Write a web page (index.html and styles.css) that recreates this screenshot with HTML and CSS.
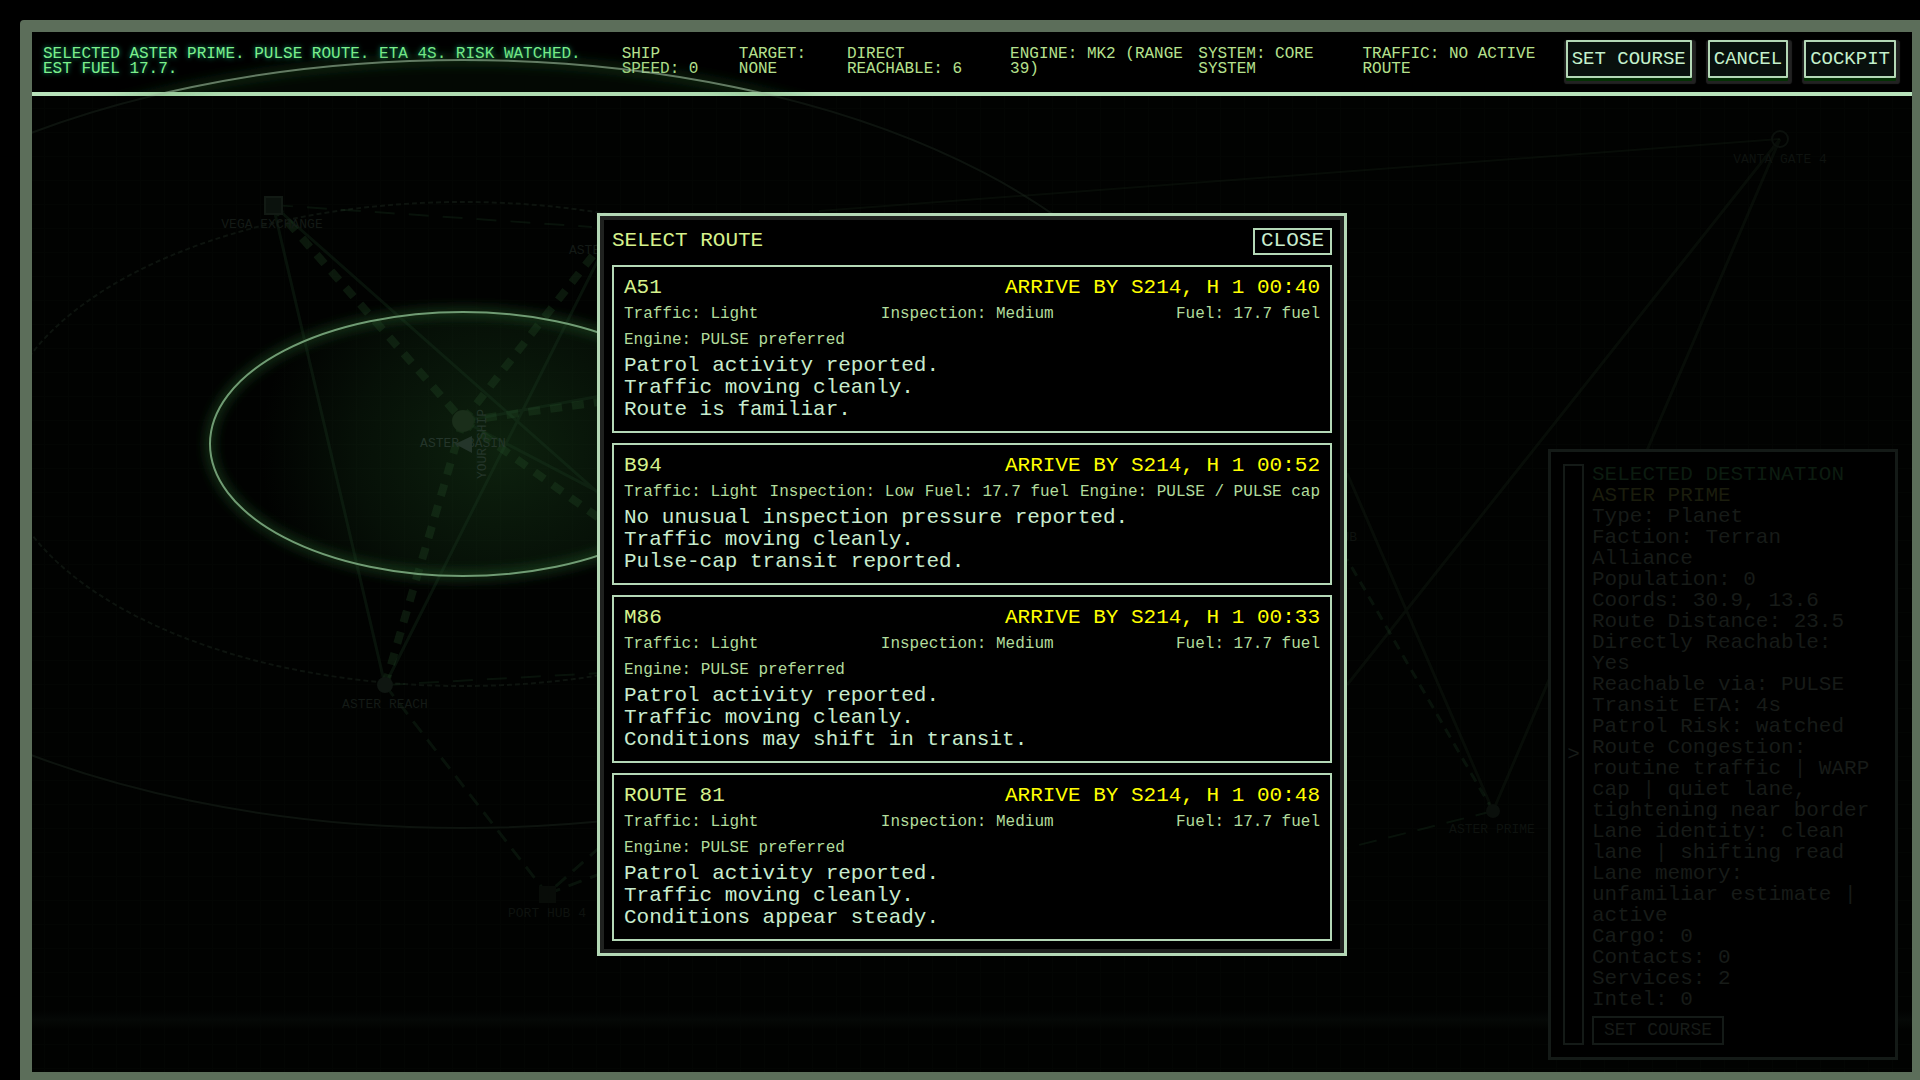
FILE: index.html
```
<!DOCTYPE html>
<html lang="en">
<head>
<meta charset="utf-8">
<meta name="viewport" content="width=device-width, initial-scale=1">
<title>Navigation</title>
<link rel="stylesheet" href="styles.css">
</head>
<body>
<div class="frame">
  <header class="topbar">
    <p class="status">SELECTED ASTER PRIME. PULSE ROUTE. ETA 4S. RISK WATCHED. EST FUEL 17.7.</p>
    <span>SHIP<br>SPEED: 0</span>
    <span>TARGET:<br>NONE</span>
    <span>DIRECT<br>REACHABLE: 6</span>
    <span>ENGINE: MK2 (RANGE<br>39)</span>
    <span>SYSTEM: CORE<br>SYSTEM</span>
    <span>TRAFFIC: NO ACTIVE<br>ROUTE</span>
    <nav class="actions">
      <button type="button">SET COURSE</button>
      <button type="button">CANCEL</button>
      <button type="button">COCKPIT</button>
    </nav>
  </header>

  <svg class="map" viewBox="32 32 1880 1040" preserveAspectRatio="xMidYMid slice" aria-hidden="true">
    <defs>
      <radialGradient id="core"><stop offset="0" stop-color="#2a6a2c" stop-opacity=".3"/><stop offset=".6" stop-color="#24602a" stop-opacity=".15"/><stop offset="1" stop-color="#24602a" stop-opacity="0"/></radialGradient>
      <filter id="glow" x="-20%" y="-20%" width="140%" height="140%"><feGaussianBlur stdDeviation="6"/></filter>
      <clipPath id="bar"><rect x="32" y="32" width="1880" height="64"/></clipPath>
      <clipPath id="space"><rect x="32" y="96" width="1880" height="976"/></clipPath>
      <clipPath id="disc"><ellipse cx="463" cy="444" rx="253" ry="132"/></clipPath>
    </defs>

    <g clip-path="url(#bar)">
      <ellipse cx="463" cy="444" rx="736" ry="384" fill="#2c8c38" fill-opacity=".06"/>
      <ellipse cx="463" cy="444" rx="736" ry="384" fill="none" stroke="#2c7c30" stroke-width="7" stroke-opacity=".35" filter="url(#glow)"/>
      <ellipse cx="463" cy="444" rx="736" ry="384" fill="none" stroke="#a0bea0" stroke-width="2" stroke-opacity=".6"/>
    </g>

    <g clip-path="url(#space)">
      <g fill="none" stroke="#0d130e" stroke-width="2">
        <ellipse cx="463" cy="444" rx="736" ry="384"/>
        <ellipse cx="463" cy="444" rx="465" ry="242" stroke-dasharray="5 3"/>
      </g>
      <ellipse cx="500" cy="450" rx="240" ry="220" fill="url(#core)" clip-path="url(#disc)"/>
      <ellipse cx="463" cy="444" rx="253" ry="132" fill="none" stroke="#2f7a3a" stroke-width="7" stroke-opacity=".5" filter="url(#glow)"/>

      <g fill="none" stroke="#23452a" stroke-opacity=".24" stroke-width="3">
        <path d="M273 205 385 685 613 230M273 205 700 583M463 421 700 545M463 421 700 378"/>
        <path d="M1780 139 1347 685M1780 139 1493 811 1347 473" stroke="#1c2e1e"/>
        <path d="M1780 139 819 211" stroke="#1c2e1e" stroke-width="2"/>
        <path d="M273 205 592 227M385 685 600 673" stroke-width="2" stroke-dasharray="20 14"/>
        <path d="M385 685 547 894 600 847M547 894 600 874" stroke-dasharray="14 9"/>
        <path d="M1493 811 1347 559" stroke-dasharray="10 7"/>
        <path d="M1493 811 1347 848" stroke-width="2" stroke-dasharray="18 12"/>
      </g>
      <g fill="none" stroke="#2c5a30" stroke-opacity=".26" stroke-width="8" stroke-dasharray="12 10">
        <path d="M273 205 463 421"/><path d="M463 421 613 230"/><path d="M463 421 385 685"/><path d="M463 421 700 388"/><path d="M463 421 700 590"/>
      </g>

      <ellipse cx="463" cy="444" rx="253" ry="132" fill="none" stroke="#709c74" stroke-width="2"/>

      <rect x="265" y="197" width="17" height="17" fill="#0b120d" stroke="#121a14" stroke-width="2"/>
      <circle cx="463" cy="421" r="11" fill="#1a2e1a"/>
      <circle cx="385" cy="685" r="8" fill="#0f1611"/>
      <rect x="539" y="886" width="17" height="17" fill="#080c08"/>
      <circle cx="1780" cy="139" r="8" fill="none" stroke="#0b100c" stroke-width="2"/>
      <circle cx="1493" cy="811" r="7" fill="#0a0f0b"/>
      <path d="M455 444 472 436V453Z" fill="#24352a"/>

      <g class="labels" text-anchor="middle">
        <text x="272" y="228">VEGA EXCHANGE</text>
        <text x="463" y="447" class="lit">ASTER BASIN</text>
        <text x="385" y="708">ASTER REACH</text>
        <text x="547" y="917" class="far">PORT HUB 4</text>
        <text x="1780" y="163" class="far">VANTA GATE 4</text>
        <text x="1492" y="833" class="far">ASTER PRIME</text>
        <text x="569" y="254" text-anchor="start">ASTER</text>
        <text x="1357" y="541" text-anchor="end" class="far">HUB</text>
        <text transform="translate(486 444) rotate(-90)" class="lit">YOUR SHIP</text>
      </g>
    </g>
  </svg>

  <main class="space">
    <aside class="panel">
      <button type="button" class="fold" aria-label="Collapse panel">&gt;</button>
      <div class="info">
        <h2>SELECTED DESTINATION</h2>
        <h3>ASTER PRIME</h3>
        <p>Type: Planet</p>
        <p>Faction: Terran Alliance</p>
        <p>Population: 0</p>
        <p>Coords: 30.9, 13.6</p>
        <p>Route Distance: 23.5</p>
        <p>Directly Reachable: Yes</p>
        <p>Reachable via: PULSE</p>
        <p>Transit ETA: 4s</p>
        <p>Patrol Risk: watched</p>
        <p>Route Congestion: routine traffic | WARP cap | quiet lane, tightening near border</p>
        <p>Lane identity: clean lane | shifting read</p>
        <p>Lane memory: unfamiliar estimate | active</p>
        <p>Cargo: 0</p>
        <p>Contacts: 0</p>
        <p>Services: 2</p>
        <p>Intel: 0</p>
        <button type="button" class="set">SET COURSE</button>
      </div>
    </aside>

    <section class="modal" role="dialog" aria-labelledby="dlg">
      <div class="modal-head">
        <h1 id="dlg">SELECT ROUTE</h1>
        <button type="button" class="close">CLOSE</button>
      </div>
      <article class="route">
        <div class="route-head"><h2>A51</h2><strong>ARRIVE BY S214, H 1 00:40</strong></div>
        <div class="meta"><span>Traffic: Light</span><span>Inspection: Medium</span><span>Fuel: 17.7 fuel</span><span>Engine: PULSE preferred</span></div>
        <div class="notes"><p>Patrol activity reported.</p><p>Traffic moving cleanly.</p><p>Route is familiar.</p></div>
      </article>
      <article class="route">
        <div class="route-head"><h2>B94</h2><strong>ARRIVE BY S214, H 1 00:52</strong></div>
        <div class="meta"><span>Traffic: Light</span><span>Inspection: Low</span><span>Fuel: 17.7 fuel</span><span>Engine: PULSE / PULSE cap</span></div>
        <div class="notes"><p>No unusual inspection pressure reported.</p><p>Traffic moving cleanly.</p><p>Pulse-cap transit reported.</p></div>
      </article>
      <article class="route">
        <div class="route-head"><h2>M86</h2><strong>ARRIVE BY S214, H 1 00:33</strong></div>
        <div class="meta"><span>Traffic: Light</span><span>Inspection: Medium</span><span>Fuel: 17.7 fuel</span><span>Engine: PULSE preferred</span></div>
        <div class="notes"><p>Patrol activity reported.</p><p>Traffic moving cleanly.</p><p>Conditions may shift in transit.</p></div>
      </article>
      <article class="route">
        <div class="route-head"><h2>ROUTE 81</h2><strong>ARRIVE BY S214, H 1 00:48</strong></div>
        <div class="meta"><span>Traffic: Light</span><span>Inspection: Medium</span><span>Fuel: 17.7 fuel</span><span>Engine: PULSE preferred</span></div>
        <div class="notes"><p>Patrol activity reported.</p><p>Traffic moving cleanly.</p><p>Conditions appear steady.</p></div>
      </article>
    </section>
  </main>
</div>
</body>
</html>
```
FILE: styles.css
```
* { box-sizing: border-box; }

html, body { height: 100%; }

body {
  margin: 0;
  padding: 20px 0 0 20px;
  overflow: hidden;
  background: #000;
  color: #c8ecce;
  font: 16px/15px "Liberation Mono", monospace;
}

h1, h2, h3, p { margin: 0; font-size: inherit; font-weight: 400; }

button {
  padding: 0;
  border: 2px solid #b4d8b6;
  border-radius: 0;
  background: #000;
  color: inherit;
  font: inherit;
  white-space: nowrap;
}

.frame {
  position: relative;
  display: flex;
  flex-direction: column;
  width: calc(100% + 4px);
  height: calc(100% + 4px);
  border: 12px solid #5c6e5a;
  border-radius: 4px;
}

/* Top bar */
.topbar {
  display: grid;
  grid-template-columns: 578fr 117fr 108fr 163fr 188fr 164fr 203fr auto;
  align-items: center;
  height: 64px;
  padding: 0 16px 0 11px;
  border-bottom: 4px solid #b8e2ba;
  background: #000;
  color: #b6e08e;
  white-space: nowrap;
}

.status {
  padding-right: 30px;
  color: #7cf08c;
  text-shadow: 0 0 5px #12a070;
  white-space: normal;
}

.actions {
  display: flex;
  gap: 16px;
  align-self: start;
  padding-top: 8px;
}

.actions button {
  height: 38px;
  padding: 0 4px;
  border-radius: 1px;
  background: #09100d;
  box-shadow: 0 3px 0 #043004, 1px 3px 1px 3px #222;
  color: #c4f0cc;
  font-size: 19px;
}

/* Star map */
.map {
  position: absolute;
  inset: 0;
  z-index: 1;
  width: 100%;
  height: 100%;
  pointer-events: none;
}

.labels { fill: #141a16; font-size: 13px; }
.labels .lit { fill: #24352a; }
.labels .far { fill: #0e120f; }

.space {
  position: relative;
  display: grid;
  flex: 1;
  place-items: center;
  background:
    linear-gradient(transparent 914px, #050806 924px, transparent 934px),
    repeating-linear-gradient(90deg, transparent 0 12px, #030503 12px 13px, transparent 13px 24px),
    repeating-linear-gradient(transparent 0 12px, #030503 12px 13px, transparent 13px 24px),
    #010201;
}

/* Destination panel */
.panel {
  position: absolute;
  right: 14px;
  bottom: 12px;
  z-index: 2;
  display: flex;
  gap: 8px;
  width: 350px;
  padding: 12px 16px 12px 12px;
  border: 3px solid #141a17;
  background: #000;
  color: #171b18;
  font-size: 21px;
  line-height: 21px;
}

.panel button { border-color: #141a17; }
.panel h2 { color: #0c1c10; }
.panel h3 { color: #1b1d0d; }
.fold { flex: none; width: 21px; }
.info { flex: 1; }

.set {
  display: block;
  height: 29px;
  margin-top: 6px;
  padding: 0 10px;
  font-size: 18px;
}

/* Route dialog */
.modal {
  z-index: 3;
  display: flex;
  flex-direction: column;
  gap: 10px;
  width: 750px;
  padding: 12px;
  border: 3px solid #b4d8b6;
  background: #000;
  box-shadow: inset 0 0 0 4px #202220;
  font-size: 21px;
  line-height: 22px;
}

.modal-head, .route-head {
  display: flex;
  justify-content: space-between;
  align-items: center;
}

.modal h1, .route h2 { color: #d6f28c; }

.close { height: 27px; padding: 0 6px; }

.route {
  display: flex;
  flex-direction: column;
  gap: 6px;
  padding: 10px;
  border: 2px solid #b4d8b6;
}

.route strong { color: #ff0; font-weight: 400; }

.meta {
  display: flex;
  flex-wrap: wrap;
  justify-content: space-between;
  gap: 8px 10px;
  color: #b2dc9c;
  font-size: 16px;
  line-height: 18px;
}
```
